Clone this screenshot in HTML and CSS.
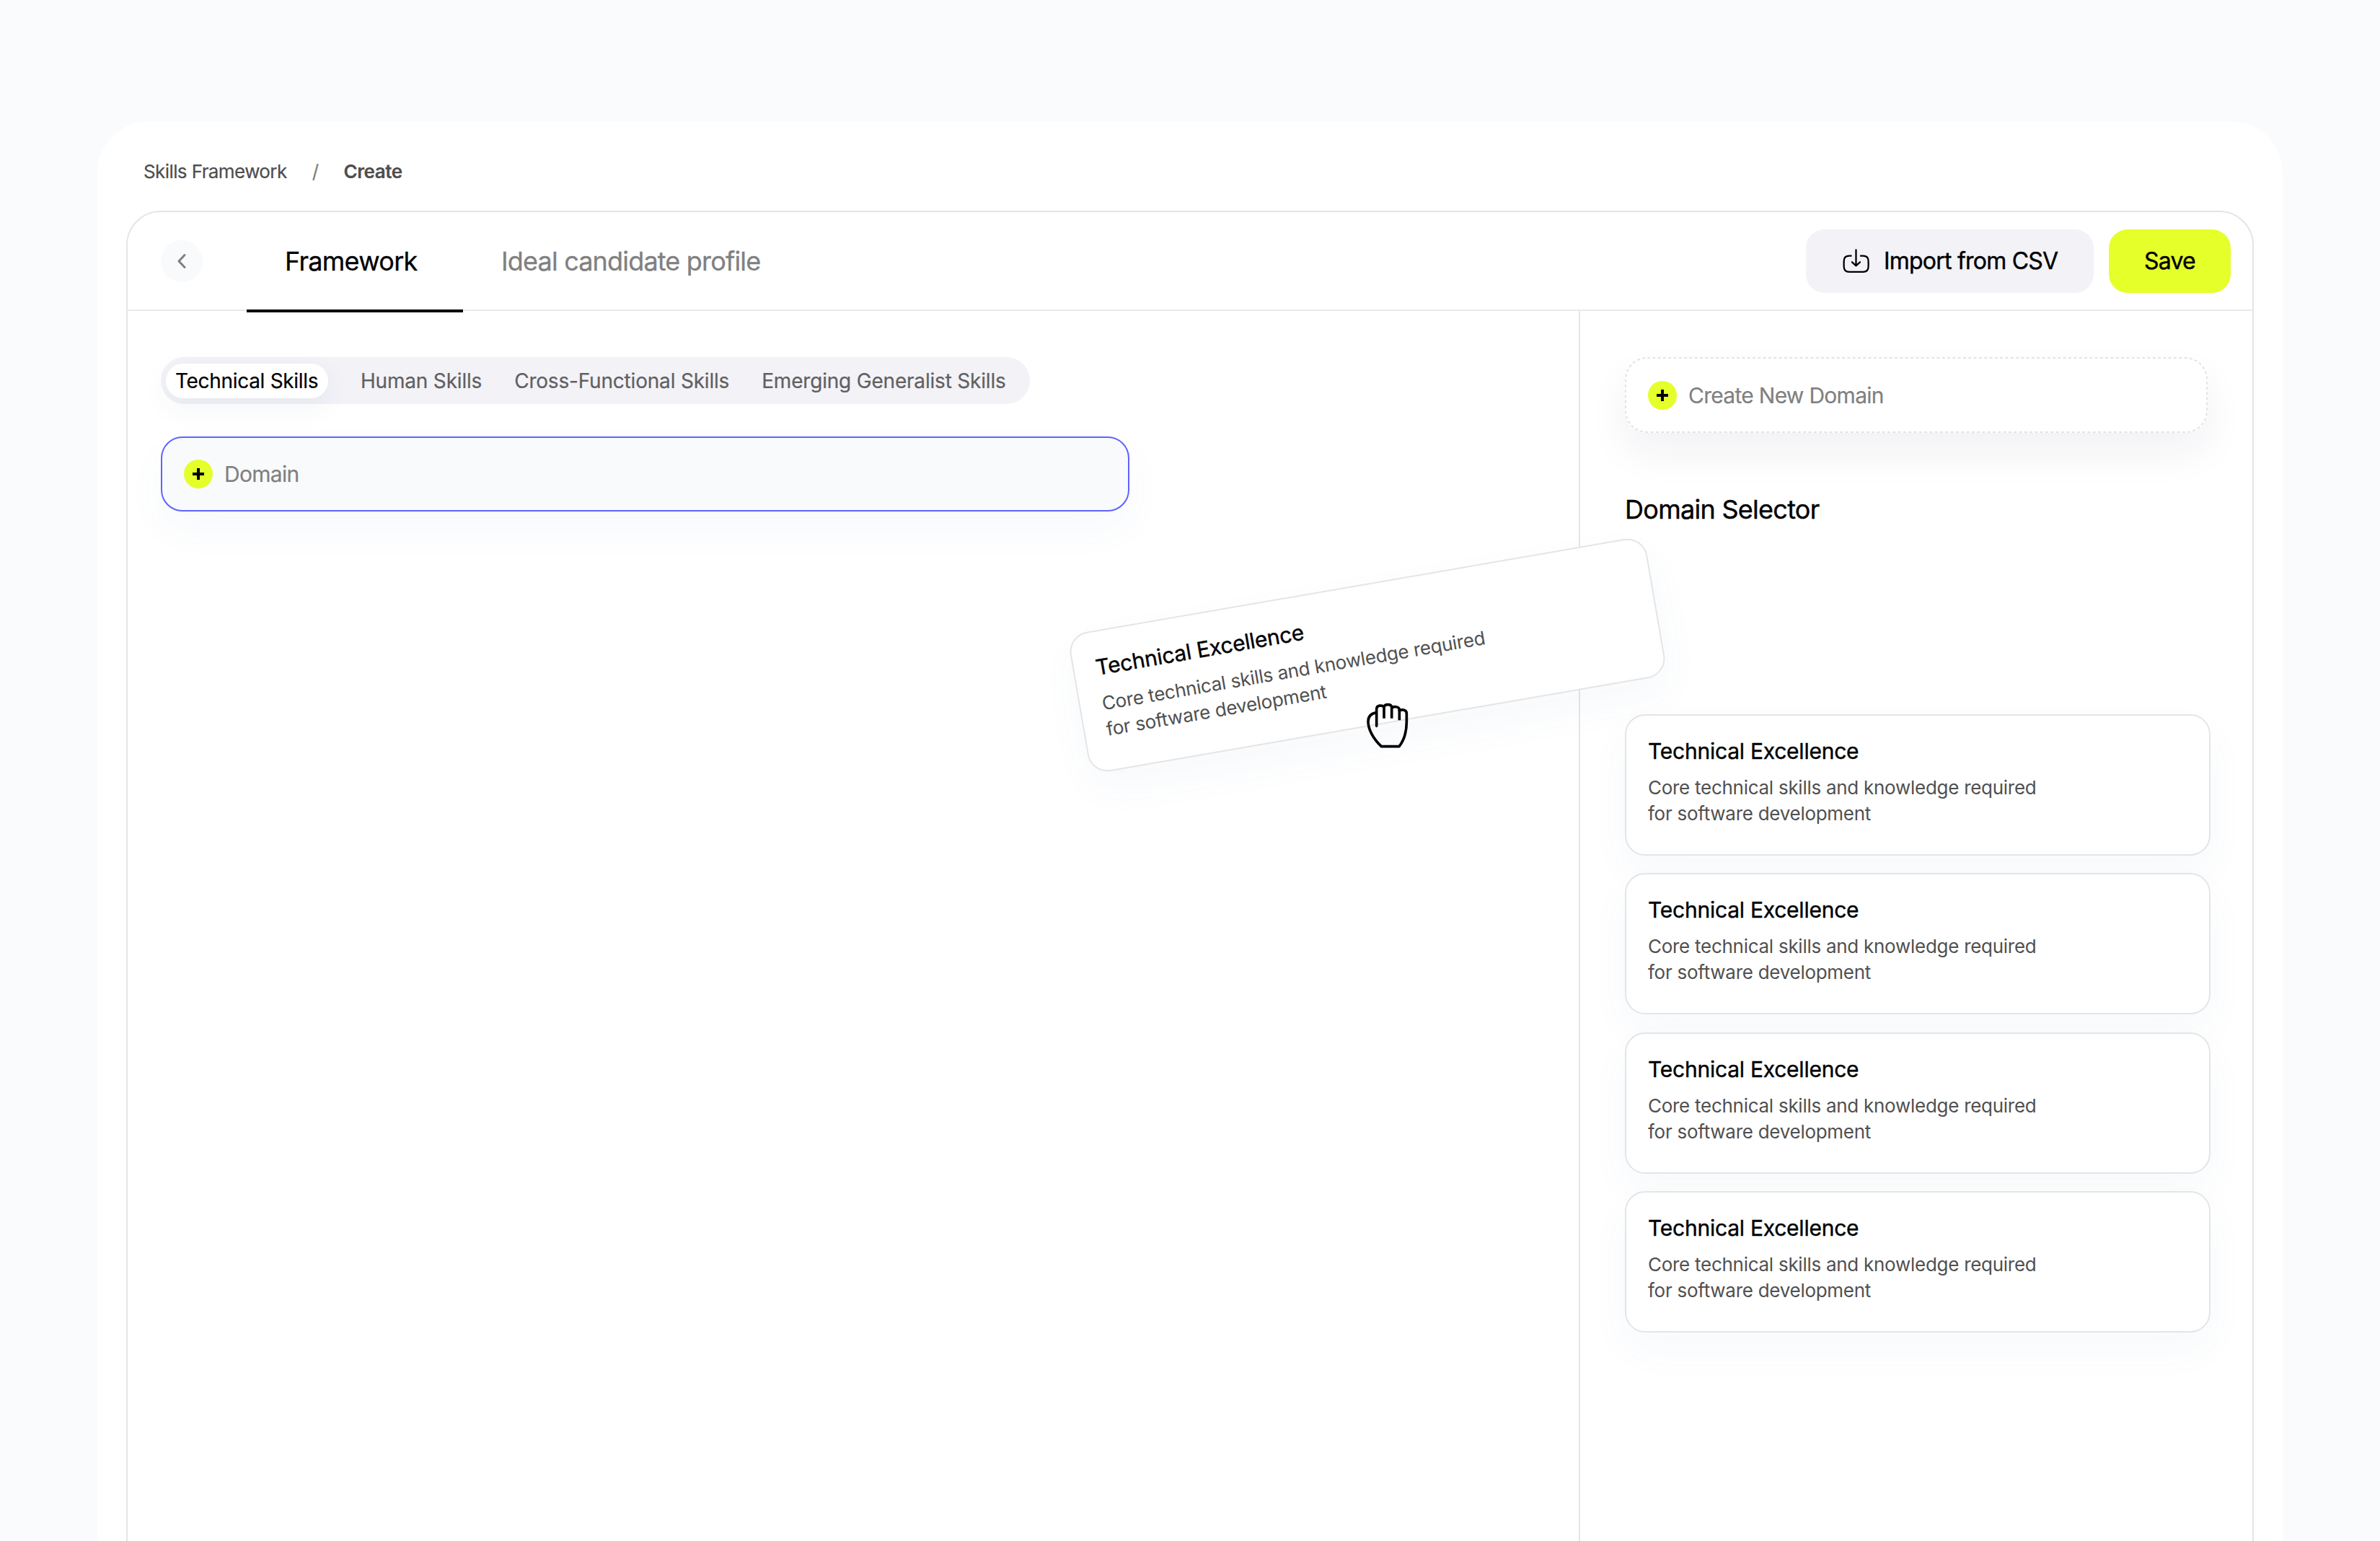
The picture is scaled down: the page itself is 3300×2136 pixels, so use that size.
FILE: index.html
```html
<!DOCTYPE html>
<html lang="en">
<head>
    <meta charset="UTF-8">
    <meta name="viewport" content="width=device-width, initial-scale=1.0">
    <title>Skills Framework</title>
    <link rel="stylesheet" href="styles.css">
</head>
<body>
    <div class="window">
        <nav class="breadcrumb">
            <span>Skills Framework</span>
            <span class="separator">/</span>
            <strong>Create</strong>
        </nav>

        <div class="panel">
            <header class="header">
                <button class="back">
                    <svg width="14" height="22" viewBox="0 0 14 22" fill="none" stroke="#808080" stroke-width="3" stroke-linecap="round" stroke-linejoin="round"><path d="M11 2.5 3 11l8 8.5"/></svg>
                </button>
                <div class="tabs">
                    <a class="tab active">Framework</a>
                    <a class="tab">Ideal candidate profile</a>
                </div>
                <div class="actions">
                    <button class="button button-import">
                        <svg width="39.3" height="35.3" viewBox="42 44 118 106" fill="none" stroke="#000" stroke-width="6.8" stroke-linecap="round" stroke-linejoin="round">
                            <path d="M80 76H72C57 76 50 84 50 98V120C50 135 57 143 72 143H130C145 143 152 135 152 120V98C152 84 145 76 130 76H120"/>
                            <path d="M100.500 51V117M84 102l16.500 15 16.500-15"/>
                        </svg>
                        Import from CSV
                    </button>
                    <button class="button button-save">Save</button>
                </div>
            </header>

            <div class="content">
                <main class="board">
                    <div class="skills">
                        <a class="skill active">Technical Skills</a>
                        <a class="skill">Human Skills</a>
                        <a class="skill">Cross-Functional Skills</a>
                        <a class="skill">Emerging Generalist Skills</a>
                    </div>
                    <div class="drop-zone">
                        <span class="plus"></span>
                        <span>Domain</span>
                    </div>
                </main>

                <aside class="sidebar">
                    <div class="create-domain">
                        <svg class="dashes" width="808" height="105" fill="none"><rect x="1" y="1" width="806" height="103" rx="30" stroke="#e3e3e5" stroke-width="2" stroke-dasharray="4 3.3"/></svg>
                        <span class="plus"></span>
                        <span>Create New Domain</span>
                    </div>
                    <h2 class="sidebar-title">Domain Selector</h2>
                    <div class="cards">
                        <div class="card-slot"></div>
                        <div class="card">
                            <h3>Technical Excellence</h3>
                            <p>Core technical skills and knowledge required<br>for software development</p>
                        </div>
                        <div class="card">
                            <h3>Technical Excellence</h3>
                            <p>Core technical skills and knowledge required<br>for software development</p>
                        </div>
                        <div class="card">
                            <h3>Technical Excellence</h3>
                            <p>Core technical skills and knowledge required<br>for software development</p>
                        </div>
                        <div class="card">
                            <h3>Technical Excellence</h3>
                            <p>Core technical skills and knowledge required<br>for software development</p>
                        </div>
                    </div>
                </aside>
            </div>
        </div>
    </div>

    <!-- card being dragged -->
    <div class="card dragged">
        <h3>Technical Excellence</h3>
        <p>Core technical skills and knowledge required<br>for software development</p>
    </div>
    <svg class="hand" width="61.7" height="65.7" viewBox="100 98 185 197" fill="none" stroke="#000" stroke-width="11">
        <path d="M147 198V128C147 110 172 110 178 120M147 142C122 146 112 158 112 180C112 212 134 252 167 283H241C262 256 272 220 272 180V146C272 130 254 128 242 134" stroke-linecap="round" stroke-linejoin="round"/>
        <path d="M178 166V120C180 105 208 105 210 120V166M210 125C214 115 242 115 242 132V174"/>
    </svg>
</body>
</html>
```
FILE: styles.css
```css
* {
    box-sizing: border-box;
}
body {
    margin: 0;
    height: 2136px;
    padding: 168px 135px 0;
    overflow: hidden;
    font-family: Inter, sans-serif;
    color: #000;
    background: #f9fbfd;
}
h2, h3, p {
    margin: 0;
    font-weight: 400;
}
button {
    border: none;
    padding: 0;
    font: inherit;
    color: inherit;
    cursor: pointer;
}
.window {
    height: 1968px;
    padding: 0 40px;
    border-radius: 72px 72px 0 0;
    background: #fff;
    overflow: hidden;
}
.breadcrumb {
    display: flex;
    height: 124px;
    padding: 54px 0 0 24px;
    font-size: 26px;
    line-height: 32px;
    letter-spacing: -0.023em;
    color: #4d4d4d;
    -webkit-text-stroke: 0.2px;
}
.breadcrumb strong {
    font-weight: 600;
    letter-spacing: -0.015em;
}
.separator {
    margin: 0 35px;
    color: #808080;
}
.panel {
    display: flex;
    flex-direction: column;
    height: 1880px;
    border: 2px solid #e5e5e5;
    border-radius: 48px 48px 0 0;
}
.header {
    display: flex;
    align-items: center;
    height: 137px;
    padding: 0 30px 0 46px;
    border-bottom: 2px solid #e9e9eb;
}
.back {
    display: flex;
    align-items: center;
    justify-content: center;
    width: 58px;
    height: 58px;
    border-radius: 50%;
    background: #f9fafc;
}
.tabs {
    display: flex;
    align-self: stretch;
    margin-left: 61px;
}
.tab {
    position: relative;
    width: 300px;
    padding-left: 53px;
    font-size: 36px;
    line-height: 136px;
    letter-spacing: -0.023em;
    white-space: nowrap;
    color: #808080;
    -webkit-text-stroke: 0.3px;
}
.tab.active {
    letter-spacing: -0.020em;
    color: #000;
}
.tab.active::after {
    content: "";
    position: absolute;
    left: 0;
    right: 0;
    bottom: -4px;
    height: 4px;
    background: #000;
}
.actions {
    display: flex;
    gap: 21px;
    margin-left: auto;
}
.button {
    display: flex;
    align-items: center;
    justify-content: center;
    height: 88px;
    border-radius: 26px;
    font-size: 32px;
    letter-spacing: -0.024em;
    -webkit-text-stroke: 0.4px;
}
.button-import {
    gap: 19px;
    width: 399px;
    background: #f2f2f7;
}
.button-save {
    width: 169px;
    background: #e5ff2b;
}
.content {
    display: flex;
    flex-grow: 1;
}
.board {
    width: 2012px;
    padding: 64px 46px;
}
.skills {
    display: flex;
    align-items: center;
    gap: 45px;
    width: 1205px;
    height: 65px;
    padding-left: 7px;
    border-radius: 33px;
    background: #f2f2f7;
    font-size: 28px;
    line-height: 48px;
    letter-spacing: -0.007em;
    white-space: nowrap;
    color: #606060;
    -webkit-text-stroke: 0.2px;
}
.skill.active {
    width: 225px;
    padding-left: 13px;
    border-radius: 24px;
    background: #fff;
    box-shadow: 0 12px 40px rgba(40, 60, 100, 0.06);
    letter-spacing: -0.011em;
    color: #000;
}
.drop-zone,
.create-domain {
    display: flex;
    align-items: center;
    gap: 16px;
    padding-left: 30px;
    border-radius: 30px;
    font-size: 30px;
    letter-spacing: -0.024em;
    color: #808080;
    -webkit-text-stroke: 0.2px;
}
.drop-zone {
    width: 1343px;
    height: 104px;
    margin-top: 45px;
    border: 2px solid #5f63ff;
    background: #f9fafc;
    box-shadow: 0 24px 56px rgba(60, 90, 150, 0.04);
}
.plus {
    display: flex;
    align-items: center;
    justify-content: center;
    width: 40px;
    height: 40px;
    border-radius: 50%;
    background:
        linear-gradient(#000, #000) center / 16px 4px no-repeat,
        linear-gradient(#000, #000) center / 4px 16px no-repeat,
        #e5ff2b;
}
.sidebar {
    width: 934px;
    padding: 64px 0 0 62px;
    border-left: 2px solid #e5e5e5;
}
.create-domain {
    position: relative;
    width: 808px;
    height: 105px;
    padding-left: 32px;
    background: #fff;
    box-shadow: 0 28px 56px rgba(30, 30, 80, 0.06);
}
.dashes {
    position: absolute;
    top: 0;
    left: 0;
}
.sidebar-title {
    margin: 84px 0 42px;
    font-size: 36px;
    line-height: 44px;
    letter-spacing: -0.020em;
    -webkit-text-stroke: 0.4px;
}
.cards {
    display: flex;
    flex-direction: column;
    gap: 24.200px;
}
.card,
.card-slot {
    width: 812px;
    height: 196px;
}
.card {
    padding: 29px 30px;
    border: 2px solid #e5e5e5;
    border-radius: 28px;
    background: #fff;
    box-shadow: 0 24px 56px rgba(60, 90, 150, 0.04);
}
.card h3 {
    font-size: 30px;
    line-height: 40px;
    letter-spacing: -0.008em;
    -webkit-text-stroke: 0.4px;
}
.card p {
    margin-top: 13px;
    font-size: 26px;
    line-height: 36px;
    letter-spacing: -0.0105em;
    color: #505050;
}
.dragged {
    position: absolute;
    left: 1490px;
    top: 810px;
    transform: rotate(-9.800deg);
}
.hand {
    position: absolute;
    left: 1893px;
    top: 973px;
}
```
